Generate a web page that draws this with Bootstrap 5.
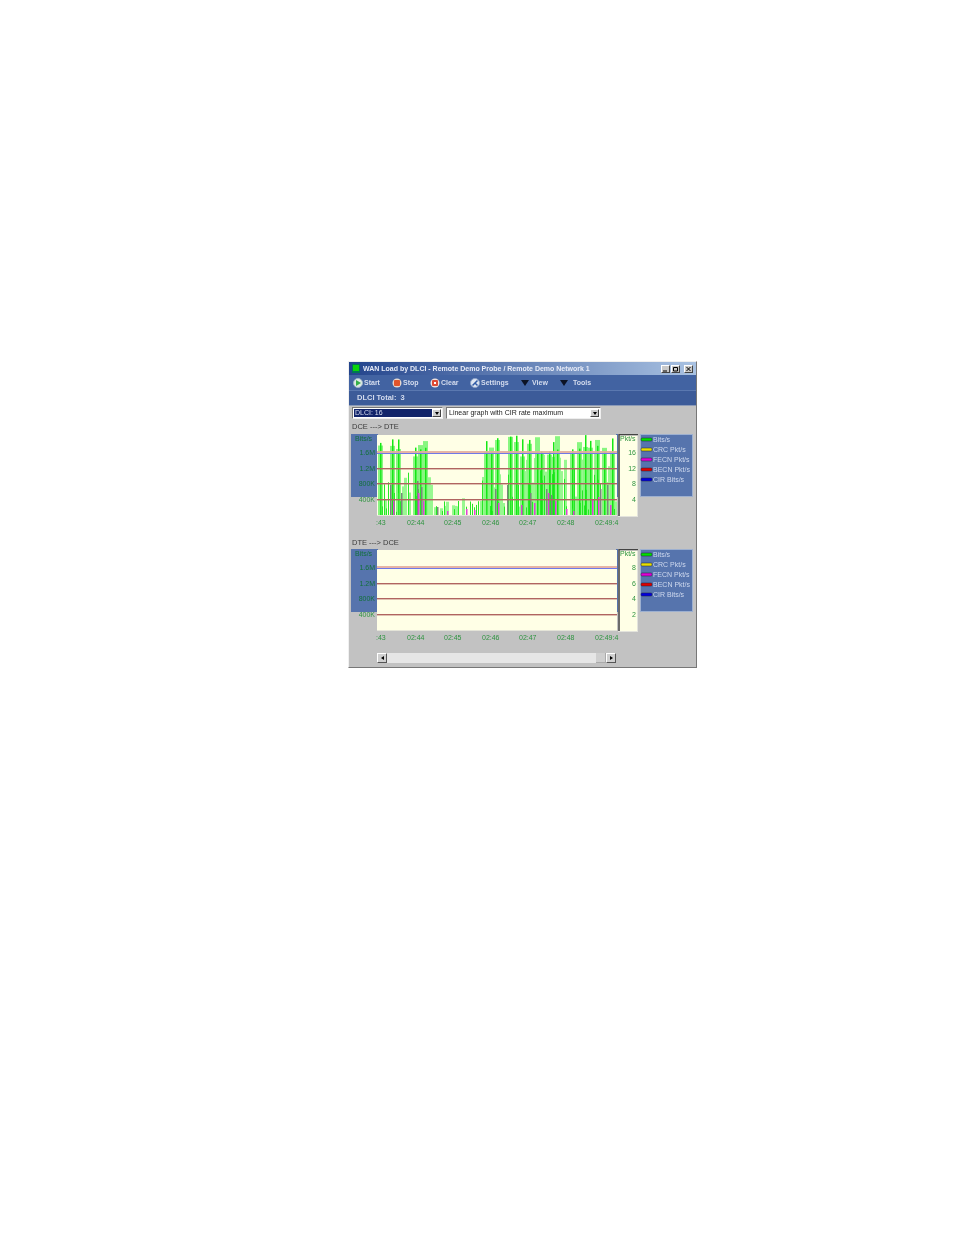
<!DOCTYPE html>
<html lang="en"><head><meta charset="utf-8"><title>WAN Load by DLCI</title>
<link href="https://cdn.jsdelivr.net/npm/bootstrap@5.3.0/dist/css/bootstrap.min.css" rel="stylesheet">
<style>
html,body{background:#fff;margin:0;overflow:hidden}
.pg{padding:361px 0 0 348px;height:1235px}
.win{width:349px;height:307px;background:#c2c2c2;border:1px solid #f0f0f0;border-right:1px solid #777;border-bottom:1px solid #777;font:7px/1 "Liberation Sans",Arial,sans-serif;color:#333;filter:blur(.5px);overflow:hidden}
.ttl{height:13px;background:linear-gradient(90deg,#23448c,#a9c2e2);color:#e8ecf8;font-weight:700;padding:0 3px 0 3px}
.ttl-ic{width:8px;height:9px;background:#0bd40b;border:1px solid #075;border-bottom-width:2px;margin-right:3px}
.wb{width:9px;height:8px;background:#c9c9c9;border:1px solid;border-color:#fff #444 #444 #fff;margin-left:1px;position:relative}
.wb svg{display:block;width:7px;height:6px}
.tb{height:16px;background:#4263a2;color:#d4dcee;padding-left:4px;font-weight:700;border-bottom:1px solid #5a78b0}
.ti{display:flex;align-items:center;gap:1px}
.t1{width:39px}.t2{width:38px}.t3{width:40px}.t4{width:51px}.t5{width:39px}
.ci{width:10px;height:10px;display:block}
.tri{width:0;height:0;border-left:4px solid transparent;border-right:4px solid transparent;border-top:6px solid #0c1224;margin-right:2px}
.tot{height:15px;background:#3c5b99;color:#d4dcee;font-weight:700;padding-left:8px;font-size:7.5px;border-bottom:1px solid #8b9ab8}
.sels{padding:1px 0 0 3px;gap:3px;height:14px}
.sel{height:12px;background:#fff;border:1px solid;border-color:#777 #eee #eee #777;padding:1px;display:flex}
.s1{width:91px}.s2{width:155px}
.sv{flex:1;padding-left:1px;line-height:8px;color:#222;white-space:nowrap;overflow:hidden}
.s1 .sv{background:#12246a;color:#d8def0}
.dd{width:9px;background:#cfcfcf;border:1px solid;border-color:#fff #444 #444 #fff;display:flex;align-items:center;justify-content:center}
.dd i{width:0;height:0;border-left:2.5px solid transparent;border-right:2.5px solid transparent;border-top:3px solid #000}
.lbl{height:8px;margin:3px 0 3px 3px;font-size:7.5px;color:#3a3a3a;line-height:8px}
.lbl2{margin:9px 0 2px 3px}
.gf{display:block;width:347px;height:96px}
.gf text{font:7px "Liberation Sans",Arial,sans-serif;fill:#2f9440}
.gf text.ob{fill:#12703a}
.gf text.lg{fill:#cfd9ee}
.scr{margin:8px 0 0 28px;height:10px;width:239px}
.sb{width:10px;height:10px;background:#d0d0d0;border:1px solid;border-color:#fff #555 #555 #fff;display:flex;align-items:center;justify-content:center}
.sb i{width:0;height:0;border-top:2.5px solid transparent;border-bottom:2.5px solid transparent}
.sl i{border-right:3px solid #000}.sr i{border-left:3px solid #000}
.trk{flex:1;background:#e6e6e6}
.thm{width:10px;height:10px;background:#cfcfcf;border-right:1px solid #aaa;border-bottom:1px solid #aaa}
</style></head><body>
<div class="pg"><div class="win">
 <div class="ttl d-flex align-items-center">
  <span class="ttl-ic"></span><span class="flex-grow-1">WAN Load by DLCI - Remote Demo Probe / Remote Demo Network 1</span>
  <span class="wb"><svg viewBox="0 0 7 6"><path d="M1 5h4" stroke="#000"/></svg></span><span class="wb"><svg viewBox="0 0 7 6"><path d="M1.500 1.500h4v3.500h-4z" fill="none" stroke="#000"/></svg></span><span class="wb ms-1"><svg viewBox="0 0 7 6"><path d="M1.500 1l4 4M5.500 1l-4 4" stroke="#000"/></svg></span>
 </div>
 <div class="tb d-flex align-items-center">
  <span class="ti t1"><svg class="ci" viewBox="0 0 10 10"><circle cx="5" cy="5" r="4.500" fill="#dfe9e4" stroke="#9fb5c8"/><path d="M3 2l5 3-5 3z" fill="#35b04a"/></svg>Start</span>
  <span class="ti t2"><svg class="ci" viewBox="0 0 10 10"><circle cx="5" cy="5" r="4.500" fill="#e6d8d0"/><rect x="2" y="2" width="6" height="6" rx="1" fill="#e2552c"/></svg>Stop</span>
  <span class="ti t3"><svg class="ci" viewBox="0 0 10 10"><circle cx="5" cy="5" r="4.500" fill="#efe0dc"/><rect x="2" y="2" width="6" height="6" rx="1" fill="#dd4a36"/><path d="M4 4l2 2M6 4l-2 2" stroke="#fff"/></svg>Clear</span>
  <span class="ti t4"><svg class="ci" viewBox="0 0 10 10"><circle cx="5" cy="5" r="4.500" fill="#dfe6f2" stroke="#8ba2c8"/><path d="M2.500 7.500L7.500 2.500M5.500 5.500l2 2" stroke="#2f5aa6" stroke-width="1.500"/></svg>Settings</span>
  <span class="ti t5"><i class="tri"></i>View</span>
  <span class="ti"><i class="tri"></i>&nbsp;Tools</span>
 </div>
 <div class="tot d-flex align-items-center">DLCI Total:&nbsp; 3</div>
 <div class="sels d-flex">
  <div class="sel s1"><span class="sv">DLCI: 16</span><span class="dd"><i></i></span></div>
  <div class="sel s2"><span class="sv">Linear graph with CIR rate maximum</span><span class="dd"><i></i></span></div>
 </div>
 <div class="lbl">DCE ---&gt; DTE</div>
 <svg class="gf" id="g1" viewBox="0 0 347 96"></svg>
 <div class="lbl lbl2">DTE ---&gt; DCE</div>
 <svg class="gf" id="g2" viewBox="0 0 347 96"></svg>
 <div class="scr d-flex"><span class="sb sl"><i></i></span><span class="trk"></span><span class="thm"></span><span class="sb sr"><i></i></span></div>
</div></div>
<script>
function build(id,axis,spikes){
 var s='';
 s+='<rect x="2" y="0" width="27" height="63" fill="#5674ad"/>';
 s+='<rect x="267" y="0" width="3" height="63" fill="#5674ad"/>';
 s+='<rect x="28" y="1" width="240" height="81" fill="#ffffe6"/>';
 s+='<rect x="28" y="81" width="240" height="1" fill="#e4e4d8"/>';
 if(spikes){s+=spikes;}
 var ys=[18,34,49,65];
 s+='<rect x="28" y="17" width="240" height="2" fill="#e4ad9c" opacity=".9"/>';
 s+='<rect x="28" y="19" width="240" height="1" fill="#6f78e8"/>';
 ys.slice(1).forEach(function(y){s+='<rect x="28" y="'+y+'" width="240" height="1.400" fill="#b06460"/>'});
 ['1.6M','1.2M','800K'].forEach(function(t,i){s+='<text class="ob" x="26" y="'+(ys[i]+3)+'" text-anchor="end">'+t+'</text>'});
 s+='<text x="26" y="68" text-anchor="end">400K</text>';
 s+='<text class="ob" x="6" y="7">Bits/s</text>';
 s+='<rect x="269" y="0" width="20" height="83" fill="#e3e3dc"/><rect x="271" y="2" width="17" height="80" fill="#ffffe6"/>';
 s+='<path d="M270 82V0.500H289" fill="none" stroke="#444" stroke-width="1.500"/>';
 s+='<text x="271" y="7">Pkt/s</text>';
 axis.forEach(function(t,i){s+='<text x="287" y="'+(ys[i]+3)+'" text-anchor="end">'+t+'</text>'});
 s+='<rect x="291.500" y="0.500" width="52" height="62" fill="#5674ad" stroke="#9db0d0"/>';
 var c=['#00e000','#e8e000','#e000d8','#e00000','#0000e0'],l=['Bits/s','CRC Pkt/s','FECN Pkt/s','BECN Pkt/s','CIR Bits/s'];
 l.forEach(function(t,i){var y=6+i*10;s+='<rect x="292" y="'+(y-2)+'" width="11" height="3" rx="1" fill="'+c[i]+'" stroke="#223" stroke-width=".5"/><text class="lg" x="304" y="'+(y+2)+'">'+t+'</text>'});
 [[':43',27],['02:44',58],['02:45',95],['02:46',133],['02:47',170],['02:48',208],['02:49:4',246]].forEach(function(a){s+='<text x="'+a[1]+'" y="91">'+a[0]+'</text>'});
 document.getElementById(id).innerHTML=s;
}
var seed=7;function r(){seed=(seed*16807)%2147483647;return seed/2147483647}
var sp='';
var tall=[380,392,398,415,420,425,486,491,497,510,516,522,529,537,541,549,553,557,572,579,585,590,597,604,612];
function ln(x,h,c,w,op){var bx=x-349;sp+='<rect x="'+bx+'" y="'+(81-h)+'" width="'+w+'" height="'+h+'" fill="'+c+'"'+(op?' opacity="'+op+'"':'')+'/>'}
var x;
for(x=378;x<617;x+=2){
 var dense=(x>=482||x<432);
 if(r()<(dense?.62:.45)){var m=dense?(x>=482?58:36):14;ln(x,4+r()*m,'#98f890',3)}
}
tall.forEach(function(x){ln(x-2,58+r()*22,'#88f680',5);ln(x,62+r()*18,'#14e814',1.500)});
for(x=378;x<617;x+=2){if(r()<.6){var d=(x>=482||x<432);ln(x,3+r()*(d?46:12),'#26e826',1)}}
[[390,30],[401,22],[417,34],[421,28],[437,8],[495,26],[507,30],[530,22],[546,26],[551,20],[600,26],[607,30]].forEach(function(a){ln(a[0],a[1],'#78887a',1.500)});
[[393,14],[418,22],[423,14],[447,4],[466,6],[474,5],[498,12],[521,10],[534,12],[548,22],[555,14],[566,6],[573,4],[592,16],[598,18],[610,10]].forEach(function(a){ln(a[0],a[1],'#e040d8',1.500)});
build('g1',['16','12','8','4'],sp);
build('g2',['8','6','4','2'],'');
</script>
<script src="https://cdn.jsdelivr.net/npm/bootstrap@5.3.0/dist/js/bootstrap.bundle.min.js"></script>
</body></html>
